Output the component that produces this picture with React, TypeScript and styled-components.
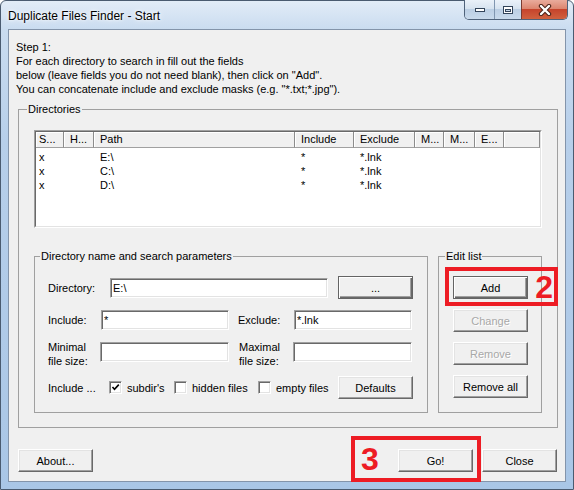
import styled, { createGlobalStyle } from "styled-components";

const GlobalStyle = createGlobalStyle`
  html, body {
    margin: 0;
    padding: 0;
    background: #ffffff;
  }
  body {
    font-family: "Liberation Sans", Arial, sans-serif;
    font-size: 11px;
    color: #000;
  }
  * {
    box-sizing: border-box;
  }
`;

const Window = styled.div`
  width: 574px;
  height: 490px;
  display: flex;
  flex-direction: column;
  padding: 0 7px 7px 7px;
  border: 1px solid #4a5b70;
  border-radius: 6px 6px 0 0;
  background: linear-gradient(180deg, #e2ecf7 0px, #cadcf0 28px, #b7cfea 140px, #a9c6e6 490px);
`;

const TitleBar = styled.div`
  height: 28px;
  display: flex;
  align-items: flex-start;
  justify-content: space-between;
`;

const Title = styled.div`
  margin-top: 8px;
  font-size: 12px;
  line-height: 15px;
  text-shadow: 0 0 6px #fff, 0 0 3px #fff;
`;

const CaptionGroup = styled.div`
  display: flex;
  margin-top: -1px;
  margin-right: -2px;
  height: 20px;
  border: 1px solid #4f627a;
  border-top: none;
  border-radius: 0 0 5px 5px;
  overflow: hidden;
`;

const CaptionButton = styled.div<{ $w: number; $close?: boolean }>`
  width: ${(p) => p.$w}px;
  display: flex;
  align-items: center;
  justify-content: center;
  border-left: ${(p) => (p.$close ? "1px solid #7a3b30" : "1px solid #8096b0")};
  background: ${(p) =>
    p.$close
      ? "linear-gradient(180deg, #e9ab9c 0%, #dc8670 45%, #c6442c 50%, #d0613f 100%)"
      : "linear-gradient(180deg, #eaf1f9 0%, #d7e3f0 45%, #bccfe4 50%, #c9daec 100%)"};
  &:first-child {
    border-left: none;
  }
`;

const Client = styled.div`
  flex: 1;
  position: relative;
  display: flex;
  flex-direction: column;
  background: #f0f0f0;
  border: 1px solid #8394aa;
  padding: 10px 7px 9px 9px;
`;

const Intro = styled.p`
  margin: 0 0 0 -2px;
  line-height: 14px;
`;

const GroupBox = styled.fieldset<{ $pad: string; $mt?: number; $w?: number }>`
  margin: ${(p) => p.$mt ?? 0}px 0 0 0;
  min-width: 0;
  padding: ${(p) => p.$pad};
  border: 1px solid #a0a0a0;
  ${(p) => (p.$w ? `width: ${p.$w}px; flex-shrink: 0;` : "flex: 1;")}
`;

const GroupTitle = styled.legend<{ $shift: number }>`
  margin-left: ${(p) => p.$shift}px;
  padding: 0 1px;
  font-size: 11px;
  line-height: 14px;
`;

const ListFrame = styled.div`
  height: 98px;
  display: flex;
  border: 1px solid;
  border-color: #a0a0a0 #ffffff #ffffff #a0a0a0;
`;

const ListInner = styled.div`
  flex: 1;
  background: #fff;
  border: 1px solid;
  border-color: #696969 #e3e3e3 #e3e3e3 #696969;
`;

const ListHeader = styled.div`
  display: flex;
  height: 16px;
`;

const HeaderCell = styled.div<{ $w?: number; $pad: number }>`
  ${(p) => (p.$w ? `width: ${p.$w}px; flex-shrink: 0;` : "flex: 1;")}
  padding-left: ${(p) => p.$pad}px;
  line-height: 14px;
  background: #f0f0f0;
  border-right: 1px solid #8c8c8c;
  border-bottom: 1px solid #a0a0a0;
  box-shadow: inset 1px 1px 0 #ffffff;
  white-space: nowrap;
  overflow: hidden;
`;

const ListBody = styled.div`
  padding-top: 2px;
`;

const ListRow = styled.div`
  display: flex;
  height: 14px;
  line-height: 14px;
`;

const ListCell = styled.div<{ $w: number; $pad: number }>`
  width: ${(p) => p.$w}px;
  flex-shrink: 0;
  padding-left: ${(p) => p.$pad}px;
  white-space: nowrap;
`;

const SubRow = styled.div`
  display: flex;
  gap: 10px;
  margin-top: 21px;
`;

const FieldRow = styled.div<{ $mt: number; $h: number; $align?: string }>`
  display: flex;
  align-items: ${(p) => p.$align ?? "center"};
  height: ${(p) => p.$h}px;
  margin-top: ${(p) => p.$mt}px;
`;

const FieldLabel = styled.div<{ $w: number; $ml?: number }>`
  width: ${(p) => p.$w}px;
  margin-left: ${(p) => p.$ml ?? 0}px;
  flex-shrink: 0;
  line-height: 14px;
  white-space: nowrap;
`;

const TextBox = styled.input<{ $w: number; $mt?: number }>`
  width: ${(p) => p.$w}px;
  height: 20px;
  margin: ${(p) => p.$mt ?? 0}px 0 0 0;
  flex-shrink: 0;
  padding: 0 2px;
  font-family: "Liberation Sans", Arial, sans-serif;
  font-size: 11px;
  color: #000;
  background: #fff;
  border: 1px solid;
  border-color: #a0a0a0 #ffffff #ffffff #a0a0a0;
  box-shadow: inset 1px 1px 0 #696969, inset -1px -1px 0 #e3e3e3;
  outline: none;
`;

const Button = styled.button<{ $default?: boolean; $ml?: string }>`
  width: 75px;
  height: 23px;
  flex-shrink: 0;
  margin: 0 0 0 ${(p) => p.$ml ?? "0"};
  padding: 0;
  font-family: "Liberation Sans", Arial, sans-serif;
  font-size: 11px;
  color: #000;
  background: #f0f0f0;
  border: 1px solid;
  border-color: ${(p) => (p.$default ? "#646464" : "#ffffff #696969 #696969 #ffffff")};
  box-shadow: ${(p) =>
    p.$default
      ? "inset 1px 1px 0 #ffffff, inset -1px -1px 0 #696969, inset -2px -2px 0 #a0a0a0"
      : "inset -1px -1px 0 #a0a0a0, inset 1px 1px 0 #e3e3e3"};
  &:disabled {
    color: #a8a8a8;
    text-shadow: 1px 1px 0 #ffffff;
  }
`;

const ButtonColumn = styled.div`
  display: flex;
  flex-direction: column;
  gap: 10px;
`;

const CheckItem = styled.label<{ $w: number }>`
  width: ${(p) => p.$w}px;
  flex-shrink: 0;
  display: flex;
  align-items: center;
  gap: 5px;
  line-height: 14px;
  white-space: nowrap;
`;

const CheckBox = styled.span`
  width: 13px;
  height: 13px;
  flex-shrink: 0;
  display: flex;
  align-items: center;
  justify-content: center;
  background: #fff;
  border: 1px solid;
  border-color: #a0a0a0 #ffffff #ffffff #a0a0a0;
  box-shadow: inset 1px 1px 0 #696969, inset -1px -1px 0 #e3e3e3;
`;

const Footer = styled.div`
  display: flex;
  align-items: center;
  height: 23px;
  margin: 21px 1px 0 0;
`;

const FooterSpacer = styled.div`
  flex: 1;
`;

const Annotation = styled.div<{ $x: number; $y: number; $w: number; $h: number; $justify: string }>`
  position: absolute;
  left: ${(p) => p.$x}px;
  top: ${(p) => p.$y}px;
  width: ${(p) => p.$w}px;
  height: ${(p) => p.$h}px;
  border: 4px solid #ed1c24;
  display: flex;
  align-items: center;
  justify-content: ${(p) => p.$justify};
  padding: 0 1px 0 6px;
  pointer-events: none;
`;

const AnnotationNumber = styled.span`
  font-family: "Liberation Sans", Arial, sans-serif;
  font-weight: 700;
  font-size: 32px;
  line-height: 32px;
  color: #ed1c24;
`;

const columns = [
  { title: "S...", w: 28 },
  { title: "H...", w: 30 },
  { title: "Path", w: 201 },
  { title: "Include", w: 59 },
  { title: "Exclude", w: 61 },
  { title: "M...", w: 29 },
  { title: "M...", w: 31 },
  { title: "E...", w: 29 },
];

const rows = [
  ["x", "", "E:\\", "*", "*.lnk", "", "", ""],
  ["x", "", "C:\\", "*", "*.lnk", "", "", ""],
  ["x", "", "D:\\", "*", "*.lnk", "", "", ""],
];

const pad = (i: number) => (i === 0 ? 3 : 6);

function MinGlyph() {
  return (
    <svg width="12" height="6" viewBox="0 0 12 6">
      <rect x="1.5" y="1.5" width="9" height="3" fill="#fff" stroke="#33445a" />
    </svg>
  );
}

function MaxGlyph() {
  return (
    <svg width="12" height="10" viewBox="0 0 12 10">
      <rect x="1.5" y="1.5" width="9" height="7" fill="#fff" stroke="#33445a" />
      <rect x="3.5" y="4.5" width="5" height="2" fill="#c6d6e8" stroke="#33445a" />
    </svg>
  );
}

function CloseGlyph() {
  return (
    <svg width="14" height="12" viewBox="0 0 14 12">
      <path d="M3 2 L11 10 M11 2 L3 10" stroke="#4a2118" strokeWidth="4.4" strokeLinecap="round" />
      <path d="M3 2 L11 10 M11 2 L3 10" stroke="#ffffff" strokeWidth="2.4" strokeLinecap="round" />
    </svg>
  );
}

function Check({ checked }: { checked: boolean }) {
  return (
    <CheckBox>
      {checked && (
        <svg width="9" height="9" viewBox="0 0 9 9">
          <path d="M1.5 4 L3.5 6.2 L7.8 1.6" fill="none" stroke="#000" strokeWidth="1.6" />
        </svg>
      )}
    </CheckBox>
  );
}

export default function App() {
  return (
    <>
      <GlobalStyle />
      <Window>
        <TitleBar>
          <Title>Duplicate Files Finder - Start</Title>
          <CaptionGroup>
            <CaptionButton $w={29}>
              <MinGlyph />
            </CaptionButton>
            <CaptionButton $w={27}>
              <MaxGlyph />
            </CaptionButton>
            <CaptionButton $w={46} $close>
              <CloseGlyph />
            </CaptionButton>
          </CaptionGroup>
        </TitleBar>

        <Client>
          <Intro>
            Step 1:
            <br />
            For each directory to search in fill out the fields
            <br />
            below (leave fields you do not need blank), then click on "Add".
            <br />
            You can concatenate include and exclude masks (e.g. "*.txt;*.jpg").
          </Intro>

          <GroupBox $pad="14px 15px 14px 15px" $mt={6}>
            <GroupTitle $shift={-7}>Directories</GroupTitle>
            <ListFrame>
              <ListInner>
                <ListHeader>
                  {columns.map((c, i) => (
                    <HeaderCell key={i} $w={c.w} $pad={pad(i)}>
                      {c.title}
                    </HeaderCell>
                  ))}
                  <HeaderCell $pad={0} />
                </ListHeader>
                <ListBody>
                  {rows.map((r, ri) => (
                    <ListRow key={ri}>
                      {r.map((v, ci) => (
                        <ListCell key={ci} $w={columns[ci].w} $pad={pad(ci)}>
                          {v}
                        </ListCell>
                      ))}
                    </ListRow>
                  ))}
                </ListBody>
              </ListInner>
            </ListFrame>

            <SubRow>
              <GroupBox $pad="13px 14px 13px 13px" $w={394}>
                <GroupTitle $shift={-8}>Directory name and search parameters</GroupTitle>
                <FieldRow $mt={0} $h={23}>
                  <FieldLabel $w={62}>Directory:</FieldLabel>
                  <TextBox $w={218} defaultValue="E:\" />
                  <Button $default $ml="10px">
                    ...
                  </Button>
                </FieldRow>
                <FieldRow $mt={11} $h={20}>
                  <FieldLabel $w={53}>Include:</FieldLabel>
                  <TextBox $w={128} defaultValue="*" />
                  <FieldLabel $w={56} $ml={9}>
                    Exclude:
                  </FieldLabel>
                  <TextBox $w={118} defaultValue="*.lnk" />
                </FieldRow>
                <FieldRow $mt={10} $h={28} $align="flex-start">
                  <FieldLabel $w={52}>
                    Minimal
                    <br />
                    file size:
                  </FieldLabel>
                  <TextBox $w={129} $mt={2} />
                  <FieldLabel $w={54} $ml={10}>
                    Maximal
                    <br />
                    file size:
                  </FieldLabel>
                  <TextBox $w={119} $mt={2} />
                </FieldRow>
                <FieldRow $mt={8} $h={23}>
                  <FieldLabel $w={61}>Include ...</FieldLabel>
                  <CheckItem $w={65}>
                    <Check checked />
                    subdir's
                  </CheckItem>
                  <CheckItem $w={84}>
                    <Check checked={false} />
                    hidden files
                  </CheckItem>
                  <CheckItem $w={80}>
                    <Check checked={false} />
                    empty files
                  </CheckItem>
                  <Button $ml="auto">Defaults</Button>
                </FieldRow>
              </GroupBox>

              <GroupBox $pad="13px 13px 13px 14px">
                <GroupTitle $shift={-8}>Edit list</GroupTitle>
                <ButtonColumn>
                  <Button $default>Add</Button>
                  <Button disabled>Change</Button>
                  <Button disabled>Remove</Button>
                  <Button>Remove all</Button>
                </ButtonColumn>
              </GroupBox>
            </SubRow>
          </GroupBox>

          <Footer>
            <Button>About...</Button>
            <FooterSpacer />
            <Button>Go!</Button>
            <Button $ml="9px">Close</Button>
          </Footer>

          <Annotation $x={436} $y={237} $w={113} $h={39} $justify="flex-end">
            <AnnotationNumber>2</AnnotationNumber>
          </Annotation>
          <Annotation $x={342} $y={406} $w={130} $h={46} $justify="flex-start">
            <AnnotationNumber>3</AnnotationNumber>
          </Annotation>
        </Client>
      </Window>
    </>
  );
}
